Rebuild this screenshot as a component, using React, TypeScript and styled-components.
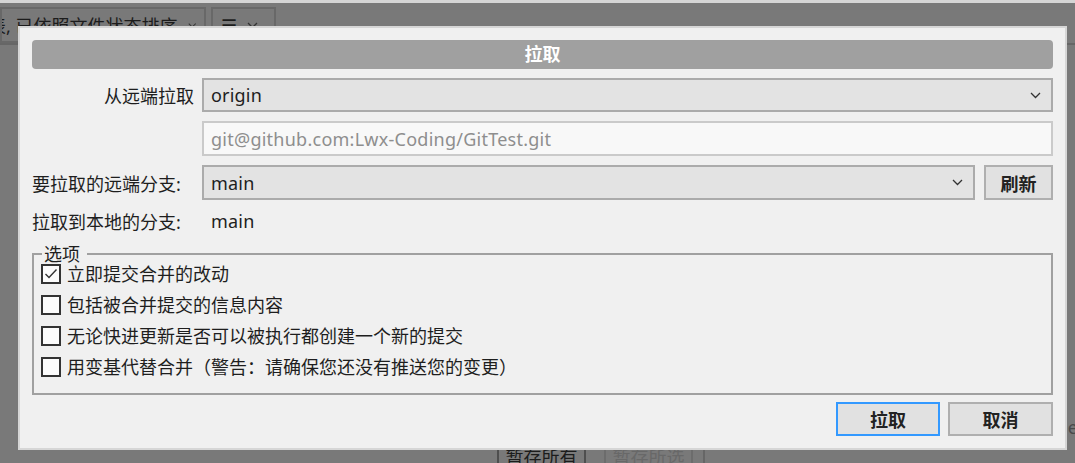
import React from 'react';
import styled, { createGlobalStyle } from 'styled-components';

const GlobalStyle = createGlobalStyle`
  html, body {
    margin: 0;
    padding: 0;
    overflow: hidden;
  }
  body {
    font-family: "Noto Sans", "Noto Sans CJK SC", sans-serif;
  }
`;

const Screen = styled.div`
  position: relative;
  width: 1075px;
  height: 463px;
  overflow: hidden;
  background: #797979;
  display: flex;
  flex-direction: column;
  font-family: "Noto Sans", "Noto Sans CJK SC", sans-serif;
`;

const TopEdge = styled.div`
  height: 3px;
  background: #d5d5d5;
`;

const Toolbar = styled.div`
  height: 42px;
  display: flex;
  align-items: flex-start;
  gap: 5px;
  padding-top: 4px;
  box-sizing: border-box;
  border-bottom: 2px solid #666;
`;

const Combo = styled.div<{ $width: number }>`
  width: ${p => p.$width}px;
  height: 36px;
  box-sizing: border-box;
  border: 2px solid #686868;
  display: flex;
  align-items: center;
  gap: 10px;
  padding: 0 8px;
  overflow: hidden;
  white-space: nowrap;
  font-size: 18px;
  color: #1c1c1c;
`;

const ComboText = styled.span`
  margin-left: -22px;
`;

const Body = styled.div`
  flex: 1;
  display: flex;
  justify-content: flex-end;
  align-items: flex-end;
`;

const EdgeText = styled.span`
  font-size: 18px;
  color: #4a4a4a;
  margin-right: -3px;
  line-height: 24px;
`;

const BottomBar = styled.div`
  height: 24px;
  display: flex;
  align-items: flex-start;
  padding-left: 497px;
  gap: 18px;
`;

const StageButton = styled.div<{ $disabled?: boolean }>`
  width: 89px;
  height: 34px;
  box-sizing: border-box;
  border: 2px solid ${p => (p.$disabled ? '#6c6c6c' : '#4e4e4e')};
  color: ${p => (p.$disabled ? '#686868' : '#1c1c1c')};
  font-size: 18px;
  display: flex;
  align-items: center;
  justify-content: center;
`;

const VLine = styled.div`
  width: 2px;
  height: 40px;
  background: #666;
  margin-left: -8px;
`;

const Dialog = styled.div`
  position: absolute;
  left: 18px;
  top: 26px;
  width: 1049px;
  height: 424px;
  box-sizing: border-box;
  background: #f0f0f0;
  border: 2px solid #d6d6d6;
  padding: 12px;
  display: flex;
  flex-direction: column;
  color: #1e1e1e;
  font-size: 18px;
`;

const TitleBar = styled.div`
  height: 29px;
  border-radius: 4px;
  background: #a0a0a0;
  color: #fff;
  font-weight: bold;
  font-size: 18px;
  line-height: 29px;
  text-align: center;
  margin-bottom: 9px;
`;

const Form = styled.div`
  display: grid;
  grid-template-columns: 162px 1fr;
  grid-template-rows: 34px 35px 35px 24px;
  column-gap: 8px;
  row-gap: 9px;
`;

const Label = styled.div<{ $right?: boolean }>`
  display: flex;
  align-items: center;
  justify-content: ${p => (p.$right ? 'flex-end' : 'flex-start')};
  white-space: nowrap;
`;

const Select = styled.div`
  flex: 1;
  box-sizing: border-box;
  height: 100%;
  background: #e3e3e3;
  border: 2px solid #ababab;
  display: flex;
  align-items: center;
  justify-content: space-between;
  padding: 0 10px 0 7px;
  letter-spacing: 0.2px;
`;

const TextBox = styled.div`
  box-sizing: border-box;
  background: #f8f8f8;
  border: 2px solid #cacaca;
  color: #8e8e8e;
  display: flex;
  align-items: center;
  padding: 0 7px;
  letter-spacing: 0.25px;
`;

const FieldRow = styled.div`
  display: flex;
  gap: 9px;
`;

const Value = styled.div`
  display: flex;
  align-items: center;
  padding-left: 9px;
  letter-spacing: 0.2px;
`;

const Button = styled.button<{ $primary?: boolean; $width: number }>`
  width: ${p => p.$width}px;
  height: 100%;
  box-sizing: border-box;
  background: #e1e1e1;
  border: 2px solid ${p => (p.$primary ? '#3399ff' : '#afafaf')};
  font-family: inherit;
  font-size: 18px;
  font-weight: bold;
  color: #222;
  padding: 0;
  cursor: pointer;
`;

const GroupBox = styled.fieldset`
  margin: 11px 0 0;
  border: 2px solid #a0a0a0;
  padding: 0 6px 16px 7px;
  min-width: 0;
  display: flex;
  flex-direction: column;
  gap: 11px;
`;

const Legend = styled.legend`
  margin-left: 1px;
  padding: 0 7px 0 2px;
  line-height: 20px;
  font-size: 18px;
`;

const Options = styled.div`
  display: flex;
  flex-direction: column;
  gap: 11px;
`;

const OptionRow = styled.label`
  display: flex;
  align-items: center;
  gap: 6px;
  height: 20px;
  line-height: 20px;
  white-space: nowrap;
`;

const Box = styled.span`
  width: 20px;
  height: 20px;
  box-sizing: border-box;
  border: 2px solid #333;
  background: #fcfcfc;
  display: flex;
  align-items: center;
  justify-content: center;
  flex-shrink: 0;
`;

const Actions = styled.div`
  margin-top: 7px;
  height: 34px;
  display: flex;
  justify-content: flex-end;
  gap: 8px;
`;

const Chevron = () => (
  <svg width="11" height="7" viewBox="0 0 11 7">
    <polyline points="1,1 5.5,5.5 10,1" fill="none" stroke="#333" strokeWidth="1.3" />
  </svg>
);

const Check = () => (
  <svg width="14" height="12" viewBox="0 0 14 12">
    <polyline points="1.5,6 5,9.5 12.5,1.5" fill="none" stroke="#333" strokeWidth="1.4" />
  </svg>
);

const options = [
  { text: '立即提交合并的改动', checked: true },
  { text: '包括被合并提交的信息内容', checked: false },
  { text: '无论快进更新是否可以被执行都创建一个新的提交', checked: false },
  { text: '用变基代替合并（警告：请确保您还没有推送您的变更）', checked: false },
];

export default function App() {
  return (
    <>
      <GlobalStyle />
      <Screen>
        <TopEdge />
        <Toolbar>
          <Combo $width={206}>
            <ComboText>表, 已依照文件状态排序</ComboText>
            <Chevron />
          </Combo>
          <Combo $width={65}>
            <span>☰</span>
            <Chevron />
          </Combo>
        </Toolbar>
        <Body>
          <EdgeText>e</EdgeText>
        </Body>
        <BottomBar>
          <StageButton>暂存所有</StageButton>
          <StageButton $disabled>暂存所选</StageButton>
          <VLine />
        </BottomBar>

        <Dialog>
          <TitleBar>拉取</TitleBar>
          <Form>
            <Label $right>从远端拉取</Label>
            <Select>
              <span>origin</span>
              <Chevron />
            </Select>

            <div />
            <TextBox>git@github.com:Lwx-Coding/GitTest.git</TextBox>

            <Label>要拉取的远端分支:</Label>
            <FieldRow>
              <Select>
                <span>main</span>
                <Chevron />
              </Select>
              <Button $width={69}>刷新</Button>
            </FieldRow>

            <Label>拉取到本地的分支:</Label>
            <Value>main</Value>
          </Form>

          <GroupBox>
            <Legend>选项</Legend>
            <Options>
              {options.map(o => (
                <OptionRow key={o.text}>
                  <Box>{o.checked && <Check />}</Box>
                  {o.text}
                </OptionRow>
              ))}
            </Options>
          </GroupBox>

          <Actions>
            <Button $primary $width={104}>拉取</Button>
            <Button $width={105}>取消</Button>
          </Actions>
        </Dialog>
      </Screen>
    </>
  );
}
